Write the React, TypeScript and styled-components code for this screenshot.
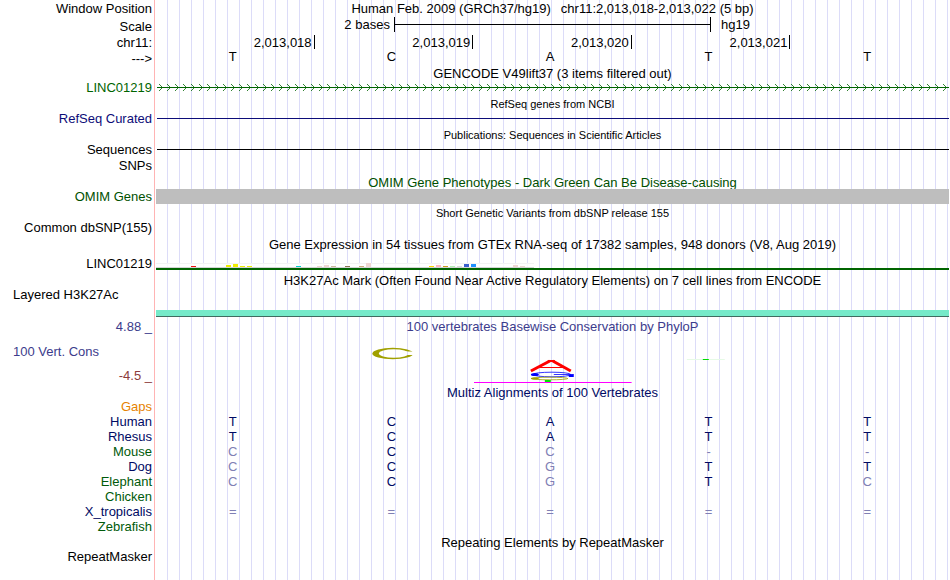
import React from 'react';
import styled, { createGlobalStyle } from 'styled-components';

const BLACK = '#000000';
const NAVY = '#000a64';
const GREEN = '#005a0a';
const CONS_BLUE = '#3c3c8c';
const CONS_RED = '#8c3c3c';

interface ISpecies {
    name: string;
    color: string;
    // lower case letters are bases that differ from the reference
    bases: string;
}

interface IBar {
    x: number;
    height: number;
    color: string;
}

const sequence = ['T', 'C', 'A', 'T', 'T'];

const positions = ['2,013,018', '2,013,019', '2,013,020', '2,013,021'];

const speciesList: ISpecies[] = [
    { name: 'Gaps', color: '#e68200', bases: '     ' },
    { name: 'Human', color: NAVY, bases: 'TCATT' },
    { name: 'Rhesus', color: NAVY, bases: 'TCATT' },
    { name: 'Mouse', color: GREEN, bases: 'cCc--' },
    { name: 'Dog', color: NAVY, bases: 'cCgTT' },
    { name: 'Elephant', color: GREEN, bases: 'cCgTc' },
    { name: 'Chicken', color: GREEN, bases: '     ' },
    { name: 'X_tropicalis', color: NAVY, bases: '=====' },
    { name: 'Zebrafish', color: GREEN, bases: '     ' },
];

const tissueBars: IBar[] = [
    { x: 35, height: 1, color: '#ee1111' },
    { x: 70, height: 2, color: '#eeee00' },
    { x: 77, height: 3, color: '#eeee00' },
    { x: 84, height: 1, color: '#eeee00' },
    { x: 91, height: 1, color: '#eeee00' },
    { x: 140, height: 1, color: '#00cdcd' },
    { x: 161, height: 1, color: '#eed5d2' },
    { x: 168, height: 2, color: '#eed5d2' },
    { x: 175, height: 1, color: '#cdb79e' },
    { x: 189, height: 1, color: '#8b7355' },
    { x: 203, height: 1, color: '#cdaa7d' },
    { x: 210, height: 4, color: '#eed5d2' },
    { x: 273, height: 1, color: '#ffd700' },
    { x: 280, height: 2, color: '#ffb6c1' },
    { x: 287, height: 1, color: '#cd9b1d' },
    { x: 294, height: 1, color: '#b4eeb4' },
    { x: 301, height: 1, color: '#d9d9d9' },
    { x: 308, height: 3, color: '#3a5fcd' },
    { x: 315, height: 3, color: '#1e90ff' },
    { x: 357, height: 2, color: '#eed5d2' },
    { x: 364, height: 1, color: '#eed5d2' },
];

export default function App() {
    return (
        <>
            <GlobalStyle />
            <Browser>
                <Ruler />
                <Group>
                    <Title>GENCODE V49lift37 (3 items filtered out)</Title>
                    <Row>
                        <Label color="#006400">LINC01219</Label>
                        <Plot>
                            <Intron />
                        </Plot>
                    </Row>
                </Group>
                <Group>
                    <Title small>RefSeq genes from NCBI</Title>
                    <Row>
                        <Label color="#0c0c78">RefSeq Curated</Label>
                        <Plot>
                            <Line color="#0c0c78" />
                        </Plot>
                    </Row>
                </Group>
                <Group>
                    <Title small>Publications: Sequences in Scientific Articles</Title>
                    <Row>
                        <Label>Sequences</Label>
                        <Plot>
                            <Line color={BLACK} />
                        </Plot>
                    </Row>
                    <Row height={16}>
                        <Label>SNPs</Label>
                    </Row>
                </Group>
                <Group>
                    <Title color="#005000">OMIM Gene Phenotypes - Dark Green Can Be Disease-causing</Title>
                    <Row>
                        <Label color="#005000">OMIM Genes</Label>
                        <GeneBlock />
                    </Row>
                </Group>
                <Group>
                    <Title small>Short Genetic Variants from dbSNP release 155</Title>
                    <Row>
                        <Label>Common dbSNP(155)</Label>
                    </Row>
                </Group>
                <Group>
                    <Title>
                        Gene Expression in 54 tissues from GTEx RNA-seq of 17382 samples, 948 donors (V8, Aug
                        2019)
                    </Title>
                    <Row height={20} align="end">
                        <Label>LINC01219</Label>
                        <Expression />
                    </Row>
                </Group>
                <Group>
                    <Title>
                        H3K27Ac Mark (Often Found Near Active Regulatory Elements) on 7 cell lines from ENCODE
                    </Title>
                    <Row height={30} align="start">
                        <Label left>Layered H3K27Ac</Label>
                        <Signal />
                    </Row>
                </Group>
                <Conservation />
                <Group>
                    <Title color={NAVY}>Multiz Alignments of 100 Vertebrates</Title>
                    <Alignment />
                </Group>
                <Group tight>
                    <Title>Repeating Elements by RepeatMasker</Title>
                    <Row>
                        <Label>RepeatMasker</Label>
                    </Row>
                </Group>
            </Browser>
        </>
    );
}

function Ruler() {
    return (
        <header>
            <Row height={17}>
                <Label>Window Position</Label>
                <Heading>
                    <span>Human Feb. 2009 (GRCh37/hg19)</span>
                    <span>chr11:2,013,018-2,013,022 (5 bp)</span>
                </Heading>
            </Row>
            <Row height={18}>
                <Label>Scale</Label>
                <Scale>
                    <ScaleText end>2 bases</ScaleText>
                    <ScaleBar />
                    <ScaleText>hg19</ScaleText>
                </Scale>
            </Row>
            <Row height={14}>
                <Label>chr11:</Label>
                <Bases>
                    {positions.map((position) => (
                        <Position key={position}>{position}</Position>
                    ))}
                </Bases>
            </Row>
            <Row height={17} align="end">
                <Label>{'--->'}</Label>
                <Bases>
                    {sequence.map((base, i) => (
                        <Base key={i}>{base}</Base>
                    ))}
                </Bases>
            </Row>
        </header>
    );
}

function Intron() {
    return (
        <Chart height={7} shapeRendering="crispEdges" aria-hidden="true">
            <defs>
                <pattern id="strand" width="8" height="7" patternUnits="userSpaceOnUse">
                    <path
                        d="M3 0h1v1h-1zM4 1h1v1h-1zM5 2h1v1h-1zM6 3h1v1h-1zM5 4h1v1h-1zM4 5h1v1h-1zM3 6h1v1h-1z"
                        fill="#006400"
                        fillOpacity="0.8"
                    />
                </pattern>
            </defs>
            <rect width="100%" height="7" fill="url(#strand)" />
            <rect x="1" y="3" width="100%" height="1" fill="#006400" />
        </Chart>
    );
}

function Expression() {
    return (
        <Chart height={20} role="img" aria-label="Expression by tissue">
            <rect y="12" width="378" height="5" fill="#ffffff" fillOpacity="0.8" />
            <rect y="12" width="378" height="1" fill="#f3f3f3" />
            <rect y="16" width="378" height="1" fill="#d3d3d3" />
            {tissueBars.map((bar) => (
                <rect key={bar.x} x={bar.x} y={16 - bar.height} width="5" height={bar.height} fill={bar.color} />
            ))}
            <rect y="17" width="100%" height="2" fill="#006400" />
        </Chart>
    );
}

function Conservation() {
    return (
        <ConservationRow>
            <ConservationLabels>
                <Label color={CONS_BLUE}>4.88 _</Label>
                <Label color={CONS_BLUE} left>
                    100 Vert. Cons
                </Label>
                <Label color={CONS_RED}>-4.5 _</Label>
            </ConservationLabels>
            <div>
                <PlotTitle>100 vertebrates Basewise Conservation by PhyloP</PlotTitle>
                <Logos>
                    <span />
                    <Logo viewBox="0 0 159 49" preserveAspectRatio="none">
                        <mask id="opening">
                            <rect width="159" height="49" fill="#fff" />
                            <ellipse cx="79" cy="19.5" rx="15" ry="4.2" fill="#000" />
                            <rect x="86" y="17.5" width="14" height="3.5" fill="#000" />
                        </mask>
                        <ellipse cx="78" cy="19.5" rx="20.5" ry="5.8" fill="#a0a000" mask="url(#opening)" />
                    </Logo>
                    <Logo viewBox="0 0 159 49" preserveAspectRatio="none">
                        <line x1="58" y1="37" x2="77" y2="27" stroke="#ff0000" strokeWidth="3" />
                        <line x1="80" y1="27" x2="98" y2="37" stroke="#ff0000" strokeWidth="3" />
                        <rect x="75" y="26" width="7" height="2" fill="#ff0000" />
                        <rect x="67" y="33" width="24" height="1" fill="#ff0000" />
                        <ellipse cx="79" cy="40.5" rx="19" ry="2.3" fill="none" stroke="#0000ff" strokeWidth="0.8" />
                        <ellipse cx="62" cy="40.5" rx="4" ry="1.6" fill="#0000ff" />
                        <line x1="81" y1="40.5" x2="101" y2="40.5" stroke="#0000ff" strokeWidth="0.8" />
                        <rect x="96" y="40.5" width="5" height="2.5" fill="#0000ff" />
                        <ellipse cx="77" cy="44.5" rx="18" ry="1.3" fill="none" stroke="#a0a000" strokeWidth="0.8" />
                        <ellipse cx="62" cy="44.5" rx="4" ry="1" fill="#a0a000" />
                        <rect x="72" y="46" width="6" height="2" fill="#00e600" />
                        <rect x="1" y="48" width="158" height="1" fill="#ff00ff" />
                    </Logo>
                    <Logo viewBox="0 0 159 49" preserveAspectRatio="none">
                        <rect x="55" y="25" width="38" height="1" fill="#e6fae6" />
                        <rect x="71" y="25" width="6" height="1" fill="#00dc00" />
                    </Logo>
                </Logos>
            </div>
        </ConservationRow>
    );
}

function Alignment() {
    return (
        <Table>
            <tbody>
                {speciesList.map((species) => (
                    <tr key={species.name}>
                        <Species scope="row" color={species.color}>
                            {species.name}
                        </Species>
                        {species.bases.split('').map((base, i) => (
                            <Cell key={i} differs={!/[A-Z]/.test(base)}>
                                {base.toUpperCase()}
                            </Cell>
                        ))}
                    </tr>
                ))}
            </tbody>
        </Table>
    );
}

const GlobalStyle = createGlobalStyle`
    body {
        margin: 0;
        background: #ffffff;
    }
`;

const Browser = styled.main`
    box-sizing: border-box;
    min-height: 100vh;
    padding-right: 1px;
    background:
        linear-gradient(#ffb4b4, #ffb4b4) 154px 0 / 1px 100% no-repeat,
        repeating-linear-gradient(to right, transparent 0 11px, #dcdcf8 11px 12px) 156px 0 / 100% 100% no-repeat;

    font-family: 'Liberation Sans', Arial, sans-serif;
    font-size: 13px;
    line-height: 15px;
    white-space: nowrap;
    color: ${BLACK};
`;

const Group = styled.section<{ tight?: boolean }>`
    margin-top: ${(props) => (props.tight ? 1 : 2)}px;

    &:first-of-type {
        margin-top: 0;
    }
`;

const Title = styled.h2<{ small?: boolean; color?: string }>`
    height: 14px;
    margin: 0 0 0 156px;
    text-align: center;
    font-size: ${(props) => (props.small ? 11 : 13)}px;
    font-weight: normal;
    color: ${(props) => props.color || BLACK};
`;

const PlotTitle = styled(Title)`
    height: 15px;
    margin: 0;
    color: ${CONS_BLUE};
`;

const Row = styled.div<{ height?: number; align?: string }>`
    display: grid;
    grid-template-columns: 156px 1fr;
    align-items: ${(props) => props.align || 'center'};
    height: ${(props) => props.height || 15}px;
`;

const Label = styled.div<{ left?: boolean; color?: string }>`
    padding: 0 4px 0 13px;
    text-align: ${(props) => (props.left ? 'left' : 'right')};
    color: ${(props) => props.color || BLACK};
`;

const Plot = styled.div`
    display: flex;
    align-items: center;
    height: 15px;
`;

const Line = styled.div<{ color: string }>`
    flex: 1;
    height: 1px;
    margin-left: 1px;
    background-color: ${(props) => props.color};
`;

const GeneBlock = styled.div`
    position: relative;
    height: 15px;
    background-color: #bebebe;
`;

const Signal = styled.div`
    height: 6px;
    margin-top: 23px;
    border-bottom: 1px solid #406b60;
    background-color: #76eac9;
`;

const Chart = styled.svg<{ height: number }>`
    display: block;
    width: 100%;
    height: ${(props) => props.height}px;
`;

const Heading = styled.h1`
    display: flex;
    justify-content: center;
    gap: 10px;
    margin: 0;
    font-size: 13px;
    font-weight: normal;
`;

const Scale = styled.div`
    display: grid;
    grid-template-columns: 30% 40% 30%;
    align-self: start;
    height: 15px;
`;

const ScaleText = styled.div<{ end?: boolean }>`
    padding: 0 ${(props) => (props.end ? 4 : 10)}px;
    text-align: ${(props) => (props.end ? 'right' : 'left')};
`;

const ScaleBar = styled.div`
    border: solid ${BLACK};
    border-width: 0 1px;
    background: linear-gradient(${BLACK}, ${BLACK}) center / 100% 1px no-repeat;
`;

const Bases = styled.div`
    display: grid;
    grid-template-columns: repeat(5, 1fr);
    align-self: start;
`;

const Position = styled.div`
    height: 14px;
    padding-right: 2px;
    border-right: 1px solid ${BLACK};
    text-align: right;
`;

const Base = styled.div`
    padding-right: 5px;
    text-align: center;
`;

const ConservationRow = styled.section`
    display: grid;
    grid-template-columns: 156px 1fr;
    height: 64px;
    margin-top: 2px;
`;

const ConservationLabels = styled.div`
    display: flex;
    flex-direction: column;
    justify-content: space-between;
`;

const Logos = styled(Bases)`
    height: 49px;
`;

const Logo = styled.svg`
    display: block;
    width: 100%;
    height: 49px;
`;

const Table = styled.table`
    width: 100%;
    table-layout: fixed;
    border-collapse: collapse;
`;

const Species = styled.th<{ color: string }>`
    width: 152px;
    padding: 0 4px 0 0;
    text-align: right;
    font-weight: normal;
    color: ${(props) => props.color};
`;

const Cell = styled.td<{ differs: boolean }>`
    height: 15px;
    padding: 0 5px 0 0;
    text-align: center;
    color: ${(props) => (props.differs ? '#8080b4' : NAVY)};
`;
